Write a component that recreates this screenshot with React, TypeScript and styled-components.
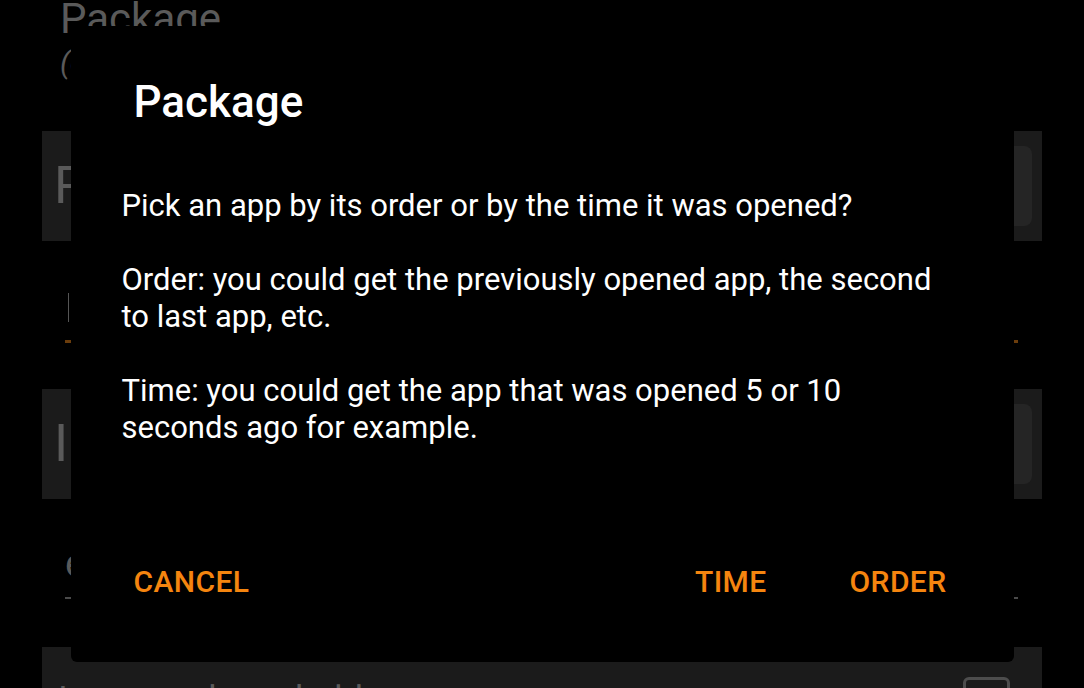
import React from 'react';
import styled, {createGlobalStyle} from 'styled-components';

const GlobalStyle = createGlobalStyle`
    html,
    body {
        margin: 0;
        padding: 0;
        background: #000;
        width: 100%;
        height: 100%;
        overflow: hidden;
    }
    body {
        font-family: Roboto, 'Noto Sans', 'Liberation Sans', sans-serif;
    }
`;

/* page behind the dialog, already dimmed by the scrim */

const Page = styled.div`
    width: 1084px;
    height: 688px;
    overflow: hidden;
    padding: 0 42px;
    box-sizing: border-box;
    color: #5a5a5a;
`;

const Header = styled.div`
    display: flex;
    flex-direction: column;
    height: 131px;
    padding-left: 18px;
    box-sizing: border-box;
`;

const HeaderTitle = styled.div`
    font-size: 42px;
    line-height: 48px;
    margin-top: -5px;
`;

const HeaderSub = styled.div`
    font-size: 30px;
    line-height: 40px;
    font-style: italic;
`;

const Card = styled.div`
    height: 110px;
    background: #1b1b1b;
    display: flex;
    align-items: center;
    padding: 0 10px 0 12px;
    box-sizing: border-box;
`;

const CardLabel = styled.div`
    font-size: 52px;
    line-height: 60px;
    white-space: nowrap;
`;

const Field = styled.div`
    flex: 1;
    height: 80px;
    margin-left: 24px;
    border-radius: 8px;
    background: #252525;
`;

const InputArea = styled.div<{$top: number}>`
    height: 148px;
    box-sizing: border-box;
    padding: ${(p) => p.$top}px 24px 0 23px;
`;

const Caret = styled.div`
    width: 1px;
    height: 29px;
    margin-left: 3px;
    background: #555;
`;

const InputText = styled.div`
    font-size: 40px;
    line-height: 48px;
    white-space: nowrap;
`;

const Underline = styled.div<{$focused?: boolean}>`
    height: ${(p) => (p.$focused ? 3 : 2)}px;
    margin-top: ${(p) => (p.$focused ? 18 : 9)}px;
    background: ${(p) => (p.$focused ? '#6b3d0c' : '#4a4a4a')};
`;

const ToggleCard = styled.div`
    height: 120px;
    background: #1b1b1b;
    display: flex;
    align-items: flex-start;
    justify-content: space-between;
    padding: 31px 32px 0 16px;
    box-sizing: border-box;
`;

const ToggleLabel = styled.div`
    font-size: 36px;
    line-height: 44px;
    white-space: nowrap;
`;

const Checkbox = styled.div`
    width: 47px;
    height: 47px;
    margin-top: -1px;
    box-sizing: border-box;
    border: 3px solid #4d4d4d;
    border-radius: 6px;
`;

/* dialog */

const Overlay = styled.div`
    position: fixed;
    inset: 0;
    display: flex;
    justify-content: center;
    align-items: center;
`;

const Dialog = styled.div`
    width: 943px;
    height: 636px;
    background: #000;
    border-radius: 6px;
    display: flex;
    flex-direction: column;
    padding: 50px 0 62px 0;
    box-sizing: border-box;
    color: #fff;
`;

const Title = styled.h2`
    margin: 0 0 0 63px;
    font-size: 44px;
    line-height: 52px;
    font-weight: 500;
`;

const Message = styled.p`
    margin: 59px 0 0 51px;
    width: 820px;
    font-size: 31px;
    line-height: 37px;
    white-space: pre-line;
`;

const ButtonRow = styled.div`
    margin-top: auto;
    display: flex;
    align-items: center;
    padding: 0 67px 0 63px;
`;

const Spacer = styled.div`
    flex: 1;
`;

const TextButton = styled.button<{$gap?: number}>`
    background: transparent;
    border: none;
    padding: 0;
    margin-left: ${(p) => p.$gap ?? 0}px;
    font-family: inherit;
    font-size: 30px;
    line-height: 36px;
    font-weight: 500;
    letter-spacing: 0.4px;
    color: #f5850f;
    cursor: pointer;
`;

const message =
    'Pick an app by its order or by the time it was opened?\n\n' +
    'Order: you could get the previously opened app, the second to last app, etc.\n\n' +
    'Time: you could get the app that was opened 5 or 10 seconds ago for example.';

export default function App(): JSX.Element {
    return (
        <>
            <GlobalStyle />
            <Page>
                <Header>
                    <HeaderTitle>Package</HeaderTitle>
                    <HeaderSub>(optional)</HeaderSub>
                </Header>
                <Card>
                    <CardLabel>Package</CardLabel>
                    <Field />
                </Card>
                <InputArea $top={52}>
                    <Caret />
                    <Underline $focused />
                </InputArea>
                <Card>
                    <CardLabel>Index</CardLabel>
                    <Field />
                </Card>
                <InputArea $top={41}>
                    <InputText>e.g. 1</InputText>
                    <Underline />
                </InputArea>
                <ToggleCard>
                    <ToggleLabel>Ignore unlaunchable apps</ToggleLabel>
                    <Checkbox />
                </ToggleCard>
            </Page>
            <Overlay>
                <Dialog>
                    <Title>Package</Title>
                    <Message>{message}</Message>
                    <ButtonRow>
                        <TextButton>CANCEL</TextButton>
                        <Spacer />
                        <TextButton>TIME</TextButton>
                        <TextButton $gap={83}>ORDER</TextButton>
                    </ButtonRow>
                </Dialog>
            </Overlay>
        </>
    );
}
